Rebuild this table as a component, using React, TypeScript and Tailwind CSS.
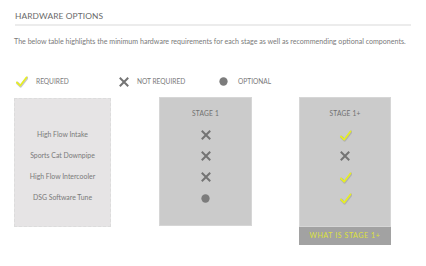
import React from "react";

const Check = ({ size = 13 }: { size?: number }) => (
  <svg width={size} height={size} viewBox="0 0 14 14" className="block">
    <path d="M2 8 L5.5 11.5 L12.5 2.5" fill="none" stroke="#9a9a9a" strokeWidth="3" strokeLinecap="round" strokeLinejoin="round" opacity="0.55" transform="translate(0.6,0.6)" />
    <path d="M2 8 L5.5 11.5 L12.5 2.5" fill="none" stroke="#e8f020" strokeWidth="1.8" strokeLinecap="round" strokeLinejoin="round" />
  </svg>
);

const Cross = ({ size = 10 }: { size?: number }) => (
  <svg width={size} height={size} viewBox="0 0 10 10" className="block">
    <path d="M1.5 1.5 L8.5 8.5 M8.5 1.5 L1.5 8.5" fill="none" stroke="#747474" strokeWidth="2" strokeLinecap="square" />
  </svg>
);

const Dot = ({ size = 9 }: { size?: number }) => (
  <svg width={size} height={size} viewBox="0 0 10 10" className="block">
    <circle cx="5" cy="5" r="4.6" fill="#7c7c7c" />
  </svg>
);

type Mark = "check" | "cross" | "dot";
const Icon = ({ m }: { m: Mark }) =>
  m === "check" ? <Check /> : m === "cross" ? <Cross /> : <Dot />;

const rows = ["High Flow Intake", "Sports Cat Downpipe", "High Flow Intercooler", "DSG Software Tune"];
const stage1: Mark[] = ["cross", "cross", "cross", "dot"];
const stage1p: Mark[] = ["check", "cross", "check", "check"];

export default function App() {
  return (
    <div
      className="w-[426px] h-[266px] bg-white text-[#6f6f6f] overflow-hidden"
      style={{ fontFamily: "Lato, 'Open Sans', sans-serif" }}
    >
      <div className="pl-[15px] pr-[15px] pt-[10px]">
        <div className="text-[8.4px] leading-[12px] tracking-[0.1px] text-[#6a6a6a]">HARDWARE OPTIONS</div>
        <div className="mt-[2px] h-[1.5px] w-[396px] bg-[#ececec]" />
        <div className="mt-[11px] text-[7.1px] leading-[9px] text-[#7a7a7a] -ml-[1px] whitespace-nowrap">
          The below table highlights the minimum hardware requirements for each stage as well as recommending optional components.
        </div>
        <div className="mt-[30px] flex items-center h-[12px] text-[6.6px] text-[#7a7a7a]">
          <div className="w-[21px]"><Check size={13} /></div>
          <div className="w-[82px]">REQUIRED</div>
          <div className="w-[19px] pl-[1px]"><Cross size={10} /></div>
          <div className="w-[82px]">NOT REQUIRED</div>
          <div className="w-[19px]"><Dot size={9} /></div>
          <div>OPTIONAL</div>
        </div>
      </div>
      <div className="mt-[9px] flex items-start pl-[14px] gap-[48px]">
        <div className="w-[97px] h-[129px] mt-[1px] bg-[#e6e4e5] border border-dashed border-[#dcdcdc] flex flex-col">
          <div className="h-[25px]" />
          {rows.map((r) => (
            <div key={r} className="h-[21px] flex items-center justify-center text-[6.9px] text-[#7a7a7a]">
              {r}
            </div>
          ))}
        </div>
        <div className="w-[93px] h-[129px] bg-[#cbcbcb] border border-[#d6d6d6] flex flex-col">
          <div className="h-[27px] pt-[5px] flex items-center justify-center text-[6.6px] text-[#707070] tracking-[0.2px]">STAGE 1</div>
          {stage1.map((m, i) => (
            <div key={i} className="h-[21px] flex items-center justify-center">
              <Icon m={m} />
            </div>
          ))}
        </div>
        <div className="-ml-[1px] w-[92px] flex flex-col">
          <div className="h-[130px] bg-[#cbcbcb] border border-[#d6d6d6] flex flex-col">
            <div className="h-[27px] pt-[5px] flex items-center justify-center text-[6.6px] text-[#707070] tracking-[0.2px]">STAGE 1+</div>
            {stage1p.map((m, i) => (
              <div key={i} className="h-[21px] flex items-center justify-center">
                <Icon m={m} />
              </div>
            ))}
          </div>
          <div className="h-[18px] bg-[#a2a2a2] flex items-center justify-center text-[7px] tracking-[0.6px] text-[#dde33a]">
            WHAT IS STAGE 1+
          </div>
        </div>
      </div>
    </div>
  );
}
